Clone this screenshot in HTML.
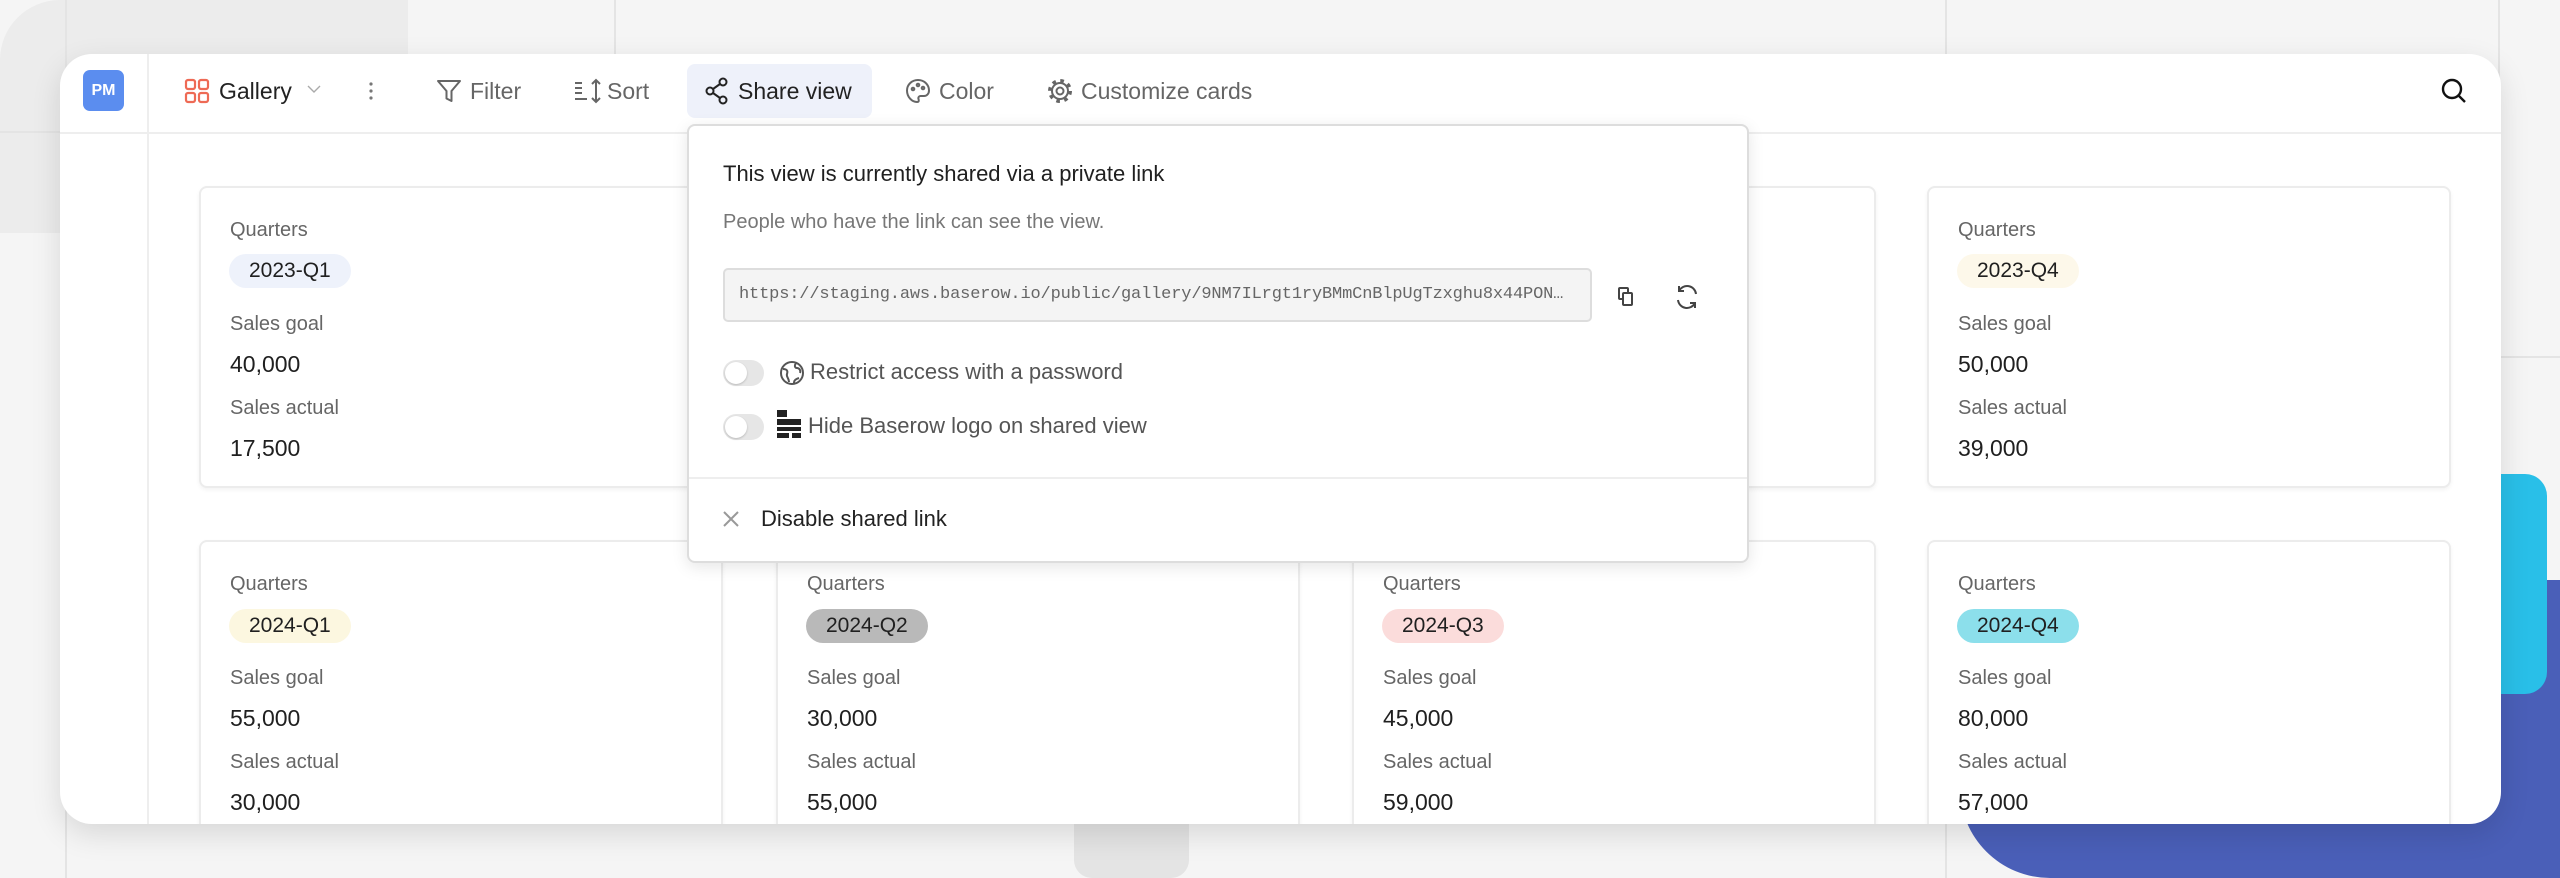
<!DOCTYPE html>
<html><head><meta charset="utf-8"><style>
*{box-sizing:border-box;margin:0;padding:0}
html,body{width:2560px;height:878px;overflow:hidden}
body{background:#f5f5f5;font-family:"Liberation Sans",sans-serif;position:relative}
.abs{position:absolute}
.card{position:absolute;width:524px;height:302px;border:2px solid #ececec;border-radius:8px;background:#fff;box-shadow:0 2px 4px rgba(0,0,0,.05)}
.lbl{position:absolute;left:29px;font-size:20px;color:#666}
.val{position:absolute;left:29px;font-size:23px;color:#202020}
.badge{position:absolute;left:28px;height:34px;border-radius:17px;padding:0 20px;font-size:21px;line-height:34px;color:#202020}
.tb{position:absolute;top:73px;font-size:23px;color:#666;line-height:36px}
.tgl{position:absolute;left:723px;width:41px;height:26px;border-radius:13px;background:#e6e6e6}
.tgl::after{content:"";position:absolute;left:2px;top:2px;width:22px;height:22px;border-radius:11px;background:#fff;box-shadow:0 1px 2px rgba(0,0,0,.2)}
</style></head><body>
<div class="abs" style="left:0;top:0;width:408px;height:233px;background:#ececec;border-radius:60px 0 0 0"></div>
<div class="abs" style="left:65px;top:0;width:2px;height:878px;background:#e4e4e4"></div>
<div class="abs" style="left:614px;top:0;width:2px;height:100px;background:#e4e4e4"></div>
<div class="abs" style="left:1945px;top:0;width:2px;height:878px;background:#e4e4e4"></div>
<div class="abs" style="left:2498px;top:0;width:2px;height:480px;background:#e4e4e4"></div>
<div class="abs" style="left:0;top:131px;width:60px;height:2px;background:#e4e4e4"></div>
<div class="abs" style="left:2500px;top:356px;width:60px;height:2px;background:#e4e4e4"></div>
<div class="abs" style="left:1960px;top:580px;width:600px;height:298px;background:#4a5fb8;border-radius:0 0 0 90px"></div>
<div class="abs" style="left:2420px;top:474px;width:127px;height:220px;background:#29bfe8;border-radius:22px"></div>
<div class="abs" style="left:1074px;top:790px;width:115px;height:88px;background:#e4e4e4;border-radius:0 0 18px 18px"></div>

<div class="abs" style="left:60px;top:54px;width:2441px;height:770px;background:#fff;border-radius:32px;box-shadow:0 10px 30px rgba(0,0,0,.12);overflow:hidden">
 <div class="abs" style="left:0;top:78px;width:2441px;height:2px;background:#eee"></div>
 <div class="abs" style="left:87px;top:0;width:2px;height:770px;background:#eee"></div>
</div>

<div class="abs" style="left:83px;top:70px;width:41px;height:41px;background:#5b8def;border-radius:7px;color:#fff;font-size:16px;font-weight:bold;text-align:center;line-height:41px">PM</div>

<svg class="abs" style="left:184px;top:78px" width="26" height="26" viewBox="0 0 26 26" fill="none" stroke="#ee6a55" stroke-width="2.2"><rect x="2" y="2" width="9" height="9" rx="2"/><rect x="15" y="2" width="9" height="9" rx="2"/><rect x="2" y="15" width="9" height="9" rx="2"/><rect x="15" y="15" width="9" height="9" rx="2"/></svg>
<div class="tb" style="left:219px;color:#222">Gallery</div>
<svg class="abs" style="left:306px;top:83px" width="16" height="12" viewBox="0 0 16 12" fill="none" stroke="#aaa" stroke-width="1.4"><path d="M2 3l6 6 6-6"/></svg>
<svg class="abs" style="left:367px;top:80px" width="8" height="22" viewBox="0 0 8 22" fill="#777"><circle cx="4" cy="4" r="1.6"/><circle cx="4" cy="11" r="1.6"/><circle cx="4" cy="18" r="1.6"/></svg>
<svg class="abs" style="left:436px;top:78px" width="26" height="26" viewBox="0 0 26 26" fill="none" stroke="#666" stroke-width="2" stroke-linejoin="round"><path d="M2 3h22l-8.5 10v10l-5-2.5V13z"/></svg>
<div class="tb" style="left:470px">Filter</div>
<svg class="abs" style="left:574px;top:78px" width="30" height="26" viewBox="0 0 30 26" fill="none" stroke="#666" stroke-width="2"><path d="M1 5h7M1 10h7M1 15h7M1 21h12M22 2v22M18 6l4-4 4 4M18 20l4 4 4-4"/></svg>
<div class="tb" style="left:607px">Sort</div>
<div class="abs" style="left:687px;top:64px;width:185px;height:54px;background:#eef1fa;border-radius:8px"></div>
<svg class="abs" style="left:704px;top:77px" width="26" height="28" viewBox="0 0 26 28" fill="none" stroke="#222" stroke-width="2"><circle cx="19" cy="5" r="3.5"/><circle cx="6" cy="14" r="3.5"/><circle cx="19" cy="23" r="3.5"/><path d="M9 12l7-5M9 16l7 5"/></svg>
<div class="tb" style="left:738px;color:#222">Share view</div>
<svg class="abs" style="left:905px;top:78px" width="26" height="26" viewBox="0 0 26 26" fill="none" stroke="#666" stroke-width="2"><path d="M13 2C7 2 2 6.5 2 12.5 2 19 7 24 12 24c2 0 2-1.5 1.5-3-.6-1.5.5-3 2-3H19c3 0 5-2.5 5-5.5C24 6.5 19 2 13 2z"/><circle cx="8" cy="11" r="1.3"/><circle cx="13" cy="7" r="1.3"/><circle cx="18" cy="10" r="1.3"/></svg>
<div class="tb" style="left:939px">Color</div>
<svg class="abs" style="left:1046px;top:77px" width="28" height="28" viewBox="0 0 28 28" fill="none" stroke="#666"><circle cx="14" cy="14" r="10" stroke-width="4" stroke-dasharray="3.5 4.35"/><circle cx="14" cy="14" r="8" stroke-width="2" fill="#fff"/><circle cx="14" cy="14" r="3.5" stroke-width="2"/></svg>
<div class="tb" style="left:1081px">Customize cards</div>
<svg class="abs" style="left:2440px;top:77px" width="28" height="28" viewBox="0 0 28 28" fill="none" stroke="#111" stroke-width="2.4"><circle cx="12" cy="12" r="9"/><path d="M19 19l6 6"/></svg>

<div class="card" style="left:199px;top:186px"><div class="lbl" style="top:31px">Quarters</div><div class="badge" style="top:66px;background:#eef2fb">2023-Q1</div><div class="lbl" style="top:125px">Sales goal</div><div class="val" style="top:163px">40,000</div><div class="lbl" style="top:209px">Sales actual</div><div class="val" style="top:247px">17,500</div></div>
<div class="card" style="left:776px;top:186px"></div>
<div class="card" style="left:1352px;top:186px"></div>
<div class="card" style="left:1927px;top:186px"><div class="lbl" style="top:31px">Quarters</div><div class="badge" style="top:66px;background:#fdf8ea">2023-Q4</div><div class="lbl" style="top:125px">Sales goal</div><div class="val" style="top:163px">50,000</div><div class="lbl" style="top:209px">Sales actual</div><div class="val" style="top:247px">39,000</div></div>
<div class="abs" style="left:60px;top:530px;width:2441px;height:294px;overflow:hidden;border-radius:0 0 32px 32px">
<div class="card" style="left:139px;top:10px;height:300px"><div class="lbl" style="top:31px">Quarters</div><div class="badge" style="top:67px;background:#fcf7e0">2024-Q1</div><div class="lbl" style="top:125px">Sales goal</div><div class="val" style="top:163px">55,000</div><div class="lbl" style="top:209px">Sales actual</div><div class="val" style="top:247px">30,000</div></div>
<div class="card" style="left:716px;top:10px;height:300px"><div class="lbl" style="top:31px">Quarters</div><div class="badge" style="top:67px;background:#b9b9b9">2024-Q2</div><div class="lbl" style="top:125px">Sales goal</div><div class="val" style="top:163px">30,000</div><div class="lbl" style="top:209px">Sales actual</div><div class="val" style="top:247px">55,000</div></div>
<div class="card" style="left:1292px;top:10px;height:300px"><div class="lbl" style="top:31px">Quarters</div><div class="badge" style="top:67px;background:#fbdcdb">2024-Q3</div><div class="lbl" style="top:125px">Sales goal</div><div class="val" style="top:163px">45,000</div><div class="lbl" style="top:209px">Sales actual</div><div class="val" style="top:247px">59,000</div></div>
<div class="card" style="left:1867px;top:10px;height:300px"><div class="lbl" style="top:31px">Quarters</div><div class="badge" style="top:67px;background:#8cdfeb">2024-Q4</div><div class="lbl" style="top:125px">Sales goal</div><div class="val" style="top:163px">80,000</div><div class="lbl" style="top:209px">Sales actual</div><div class="val" style="top:247px">57,000</div></div>
</div>

<div class="abs" style="left:687px;top:124px;width:1062px;height:439px;background:#fff;border:2px solid #ddd;border-radius:8px;box-shadow:0 4px 16px rgba(0,0,0,.1)">
 <div class="abs" style="left:0;top:351px;width:1058px;height:2px;background:#eee"></div>
</div>
<div class="abs" style="left:723px;top:161px;font-size:22px;color:#202020">This view is currently shared via a private link</div>
<div class="abs" style="left:723px;top:211px;font-size:20px;color:#777">People who have the link can see the view.</div>
<div class="abs" style="left:723px;top:268px;width:869px;height:54px;background:#f4f4f4;border:2px solid #ddd;border-radius:5px;font-family:'Liberation Mono',monospace;font-size:17px;letter-spacing:-0.15px;color:#666;line-height:50px;padding-left:14px;white-space:nowrap;overflow:hidden">https://staging.aws.baserow.io/public/gallery/9NM7ILrgt1ryBMmCnBlpUgTzxghu8x44PON…</div>
<svg class="abs" style="left:1616px;top:286px" width="20" height="22" viewBox="0 0 20 22" fill="none" stroke="#444" stroke-width="2"><rect x="3" y="2" width="9" height="11" rx="1"/><rect x="7" y="7" width="9" height="12" rx="1" fill="#fff"/></svg>
<svg class="abs" style="left:1674px;top:283px" width="26" height="28" viewBox="0 0 26 28" fill="none" stroke="#444" stroke-width="2"><path d="M22 11A9 9 0 0 0 5 8M4 17a9 9 0 0 0 17 3M5 3v5h5M21 25v-5h-5"/></svg>
<div class="tgl" style="top:360px"></div>
<svg class="abs" style="left:779px;top:360px" width="26" height="26" viewBox="0 0 26 26" fill="none" stroke="#555" stroke-width="2"><circle cx="13" cy="13" r="11"/><path d="M4 9c4 0 5 2 4 5s2 4 2 8M17 3c-2 3-1 5 1 5s4 2 3 5M15 23c0-3 2-4 5-5"/></svg>
<div class="abs" style="left:810px;top:359px;font-size:22px;color:#555">Restrict access with a password</div>
<div class="tgl" style="top:414px"></div>
<svg class="abs" style="left:777px;top:410px" width="24" height="28" viewBox="0 0 24 28" fill="#222"><rect x="0" y="0" width="10" height="7"/><rect x="0" y="9" width="24" height="6"/><rect x="0" y="17" width="24" height="4"/><rect x="0" y="23" width="12" height="5"/><rect x="15" y="23" width="9" height="5"/></svg>
<div class="abs" style="left:808px;top:413px;font-size:22px;color:#555">Hide Baserow logo on shared view</div>
<svg class="abs" style="left:722px;top:510px" width="18" height="18" viewBox="0 0 18 18" stroke="#999" stroke-width="2"><path d="M2 2l14 14M16 2L2 16"/></svg>
<div class="abs" style="left:761px;top:506px;font-size:22px;color:#222">Disable shared link</div>
</body></html>
